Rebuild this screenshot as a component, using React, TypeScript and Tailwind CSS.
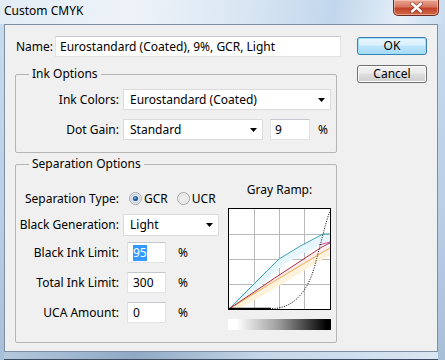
import React from 'react';

const font = { fontFamily: '"Noto Sans", "Open Sans", Arial, sans-serif' };

const Arrow = () => (
  <svg width="7" height="4" viewBox="0 0 7 4" className="shrink-0">
    <path d="M0 0 H7 L3.5 4 Z" fill="#000" />
  </svg>
);

const Select: React.FC<{ value: string; className: string }> = ({ value, className }) => (
  <div className={`h-[21px] bg-white border border-[#dcdcdc] flex items-center justify-between pl-[6px] pr-[5px] ${className}`}>
    <span>{value}</span>
    <Arrow />
  </div>
);

const TextBox: React.FC<{ className: string; children: React.ReactNode }> = ({ className, children }) => (
  <div className={`h-[21px] bg-white border border-[#e2e3e6] border-t-[#c5c8ce] flex items-center ${className}`}>
    {children}
  </div>
);

const Radio: React.FC<{ checked?: boolean }> = ({ checked }) => (
  <svg width="13" height="13" viewBox="0 0 13 13" className="shrink-0">
    <circle cx="6.5" cy="6.5" r="6" fill="#f4f4f4" stroke="#a4a6a8" />
    <circle cx="6.5" cy="6.5" r="4.5" fill={checked ? '#dfe7ef' : '#ececec'} stroke={checked ? '#c3d0dd' : '#e2e2e2'} />
    {checked && <circle cx="6.5" cy="6.5" r="2.6" fill="#2a5f9e" />}
    {checked && <circle cx="6" cy="6" r="1" fill="#7fb0e8" />}
  </svg>
);

const CloseX = () => (
  <svg width="13" height="11" viewBox="0 0 13 11">
    <path d="M2 1.5 L11 9.5 M11 1.5 L2 9.5" stroke="#6b2418" strokeWidth="4" strokeLinecap="round" opacity="0.6" />
    <path d="M2 1.5 L11 9.5 M11 1.5 L2 9.5" stroke="#fff" strokeWidth="2.4" strokeLinecap="round" />
  </svg>
);

const GrayRamp = () => (
  <svg width="101" height="100" viewBox="0 0 101 100" className="block">
    <rect width="101" height="100" fill="#fff" />
    {[25, 50, 75].map((v) => (
      <g key={v}>
        <line x1={v + 0.5} y1="0" x2={v + 0.5} y2="100" stroke="#b9b9b9" />
        <line x1="0" y1={v + 0.5} x2="101" y2={v + 0.5} stroke="#b9b9b9" />
      </g>
    ))}
    {/* soft bands */}
    <path d="M8 95 L52 53 Q72 41 94 30 L101 29" fill="none" stroke="#e6f6fa" strokeWidth="7" />
    <path d="M4 99 Q47 72 94 42 L101 39" fill="none" stroke="#fbeaee" strokeWidth="5" />
    <path d="M4 101 Q47 76 94 47 L101 44" fill="none" stroke="#fdf3dc" strokeWidth="5" />
    {/* ink curves */}
    <path d="M0 100 L50 50 Q70 37 94 25 L101 25" fill="none" stroke="#3a9fb8" strokeWidth="1" />
    <path d="M0 100 Q45 72 94 43 L101 39" fill="none" stroke="#f2b040" strokeWidth="1" />
    <path d="M0 100 Q45 69 93 38 L101 34" fill="none" stroke="#a82c40" strokeWidth="1" />
    <path d="M90 36 L101 33" fill="none" stroke="#c0409a" strokeWidth="1" />
    <path d="M0 99.5 L43 99.5 C62 99.5 78 86 86 56 S97 12 101 2" fill="none" stroke="#000" strokeWidth="1" strokeDasharray="1 1.4" />
    <path d="M0 99.5 L42 99.5" fill="none" stroke="#000" strokeWidth="1.3" />
  </svg>
);

export default function App() {
  return (
    <div
      className="w-[445px] h-[360px] flex flex-col text-[12px] leading-[16px] text-black bg-[linear-gradient(180deg,#c9dcef_0%,#b9cfe6_60%,#a8bfd8_100%)]"
      style={font}
    >
      {/* title bar */}
      <div className="h-[24px] flex items-start justify-between bg-[linear-gradient(100deg,#e3ecf5_0%,#eef3f9_30%,#d9e6f3_55%,#c2d7ec_75%,#e4eef8_90%,#c9dcef_100%)]">
        <div className="pl-[4px] pt-[3px] text-[12px]">Custom CMYK</div>
        <div className="mr-[6px] w-[46px] h-[16px] rounded-b-[5px] border border-t-0 border-[#6f2b22] bg-[linear-gradient(180deg,#e9a392_0%,#d8775f_45%,#c1412a_55%,#cf6a45_100%)] flex items-center justify-center shadow-[inset_0_0_0_1px_rgba(255,220,210,0.5)]">
          <CloseX />
        </div>
      </div>

      {/* client area */}
      <div className="ml-[4px] mr-[7px] h-[328px] border border-[#7f8fa3] bg-[#f0f0f0] flex pl-[10px] pt-[11px]">
        <div className="w-[326px] flex flex-col">
          {/* name row */}
          <div className="h-[21px] flex items-center">
            <span className="w-[40px] pl-[1px]">Name:</span>
            <TextBox className="flex-1 pl-[4px]">Eurostandard (Coated), 9%, GCR, Light</TextBox>
          </div>

          {/* ink options */}
          <fieldset className="mt-[9px] w-[322px] border border-[#b5b5b5] rounded-[2px] pb-[12px]">
            <legend className="ml-[13px] px-[3px]">Ink Options</legend>
            <div className="mt-[7px] flex items-center">
              <span className="w-[103px] text-right">Ink Colors:</span>
              <Select value="Eurostandard (Coated)" className="ml-[4px] w-[208px]" />
            </div>
            <div className="mt-[9px] flex items-center">
              <span className="w-[103px] text-right">Dot Gain:</span>
              <Select value="Standard" className="ml-[4px] w-[140px]" />
              <TextBox className="ml-[7px] w-[40px] pl-[4px]">9</TextBox>
              <span className="ml-[8px]">%</span>
            </div>
          </fieldset>

          {/* separation options */}
          <fieldset className="mt-[3px] w-[322px] border border-[#b5b5b5] rounded-[2px] pb-[12px]">
            <legend className="ml-[13px] px-[3px]">Separation Options</legend>
            <div className="flex">
              <div className="w-[212px] flex flex-col pt-[16px]">
                <div className="h-[21px] flex items-center">
                  <span className="w-[103px] text-right">Separation Type:</span>
                  <span className="ml-[10px]"><Radio checked /></span>
                  <span className="ml-[2px]">GCR</span>
                  <span className="ml-[9px]"><Radio /></span>
                  <span className="ml-[2px]">UCR</span>
                </div>
                <div className="mt-[5px] flex items-center">
                  <span className="w-[103px] text-right">Black Generation:</span>
                  <Select value="Light" className="ml-[4px] w-[96px] h-[22px]" />
                </div>
                <div className="mt-[6px] flex items-center">
                  <span className="w-[103px] text-right">Black Ink Limit:</span>
                  <TextBox className="ml-[8px] w-[39px] pl-[5px]">
                    <span className="bg-[#3399ff] text-white">95</span>
                  </TextBox>
                  <span className="ml-[12px]">%</span>
                </div>
                <div className="mt-[9px] flex items-center">
                  <span className="w-[103px] text-right">Total Ink Limit:</span>
                  <TextBox className="ml-[8px] w-[39px] pl-[5px]">300</TextBox>
                  <span className="ml-[12px]">%</span>
                </div>
                <div className="mt-[9px] flex items-center">
                  <span className="w-[103px] text-right">UCA Amount:</span>
                  <TextBox className="ml-[8px] w-[39px] pl-[5px]">0</TextBox>
                  <span className="ml-[12px]">%</span>
                </div>
              </div>

              <div className="w-[103px] flex flex-col pt-[10px]">
                <div className="text-center">Gray Ramp:</div>
                <div className="mt-[10px] border border-black">
                  <GrayRamp />
                </div>
                <div className="mt-[9px] h-[11px] bg-[linear-gradient(90deg,#ffffff_8%,#9a9a9a_50%,#000000_96%)]" />
              </div>
            </div>
          </fieldset>
        </div>

        {/* buttons */}
        <div className="ml-[16px] w-[70px] flex flex-col pt-[1px]">
          <div className="h-[18px] rounded-[3px] border border-[#3c7fb1] bg-[linear-gradient(180deg,#eaf6fd_0%,#d9f0fc_45%,#bee6fd_50%,#a7d9f5_100%)] shadow-[inset_0_0_0_1px_#9ee0fa] flex items-center justify-center">
            OK
          </div>
          <div className="mt-[10px] h-[18px] rounded-[3px] border border-[#707070] bg-[linear-gradient(180deg,#f2f2f2_0%,#ebebeb_45%,#dddddd_50%,#cfcfcf_100%)] shadow-[inset_0_0_0_1px_#fcfcfc] flex items-center justify-center">
            Cancel
          </div>
        </div>
      </div>

      {/* bottom frame */}
      <div className="flex-1 ml-[4px] mr-[7px] bg-[linear-gradient(90deg,#b4c8dd_0%,#8fa9c4_30%,#c6d7e8_60%,#d9e6f3_100%)] border-b border-[#3b4c60]" />
    </div>
  );
}
